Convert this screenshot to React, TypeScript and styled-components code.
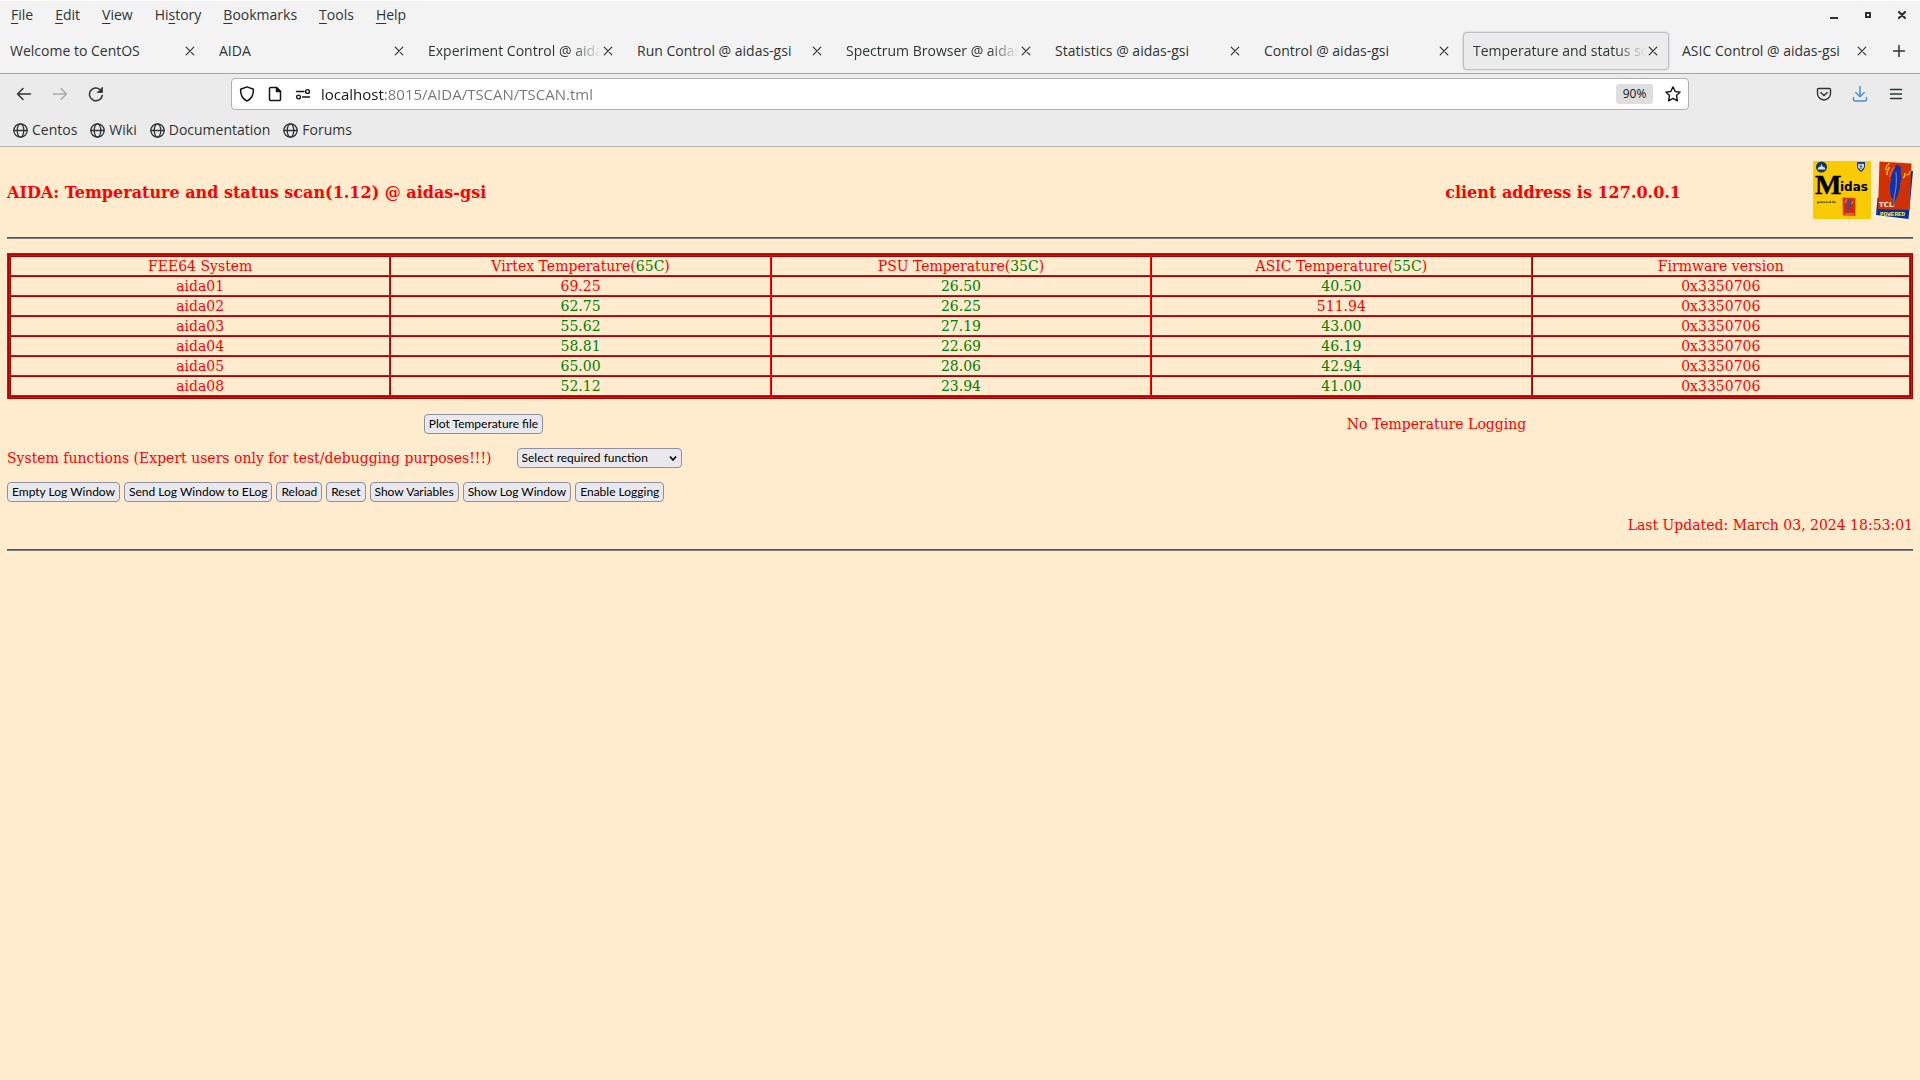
import React from "react";
import styled, { createGlobalStyle } from "styled-components";

const UI_FONT = `"Open Sans", "Noto Sans", sans-serif`;
const PAGE_FONT = `"DejaVu Serif", serif`;
const FORM_FONT = `Lato, "Open Sans", sans-serif`;

const GlobalStyle = createGlobalStyle`
  *, *::before, *::after { box-sizing: border-box; }
  body { margin: 0; background: #ffebcd; }
  button, input, select { font: inherit; color: inherit; margin: 0; }
  svg { display: block; flex: none; }
`;

/* ---------- browser chrome ---------- */

const Chrome = styled.header`
  font: 14px/20px ${UI_FONT};
  color: #2e3436;
  background: #ebebeb;
  border-bottom: 1px solid #b4b4b4;
`;

const TitleArea = styled.div`
  background: #f3f3f3;
  border-top: 1px solid #fff;
  border-bottom: 1px solid #a6a6a6;
`;

const MenuBar = styled.div`
  display: flex;
  justify-content: space-between;
  height: 28px;
`;

const MenuList = styled.nav`
  display: flex;
  align-items: center;
`;

const PlainButton = styled.button`
  border: 0;
  padding: 0;
  background: none;
  display: flex;
  align-items: center;
  justify-content: center;
`;

const MenuItem = styled.button`
  border: 0;
  background: none;
  padding: 0 11px;
  u { text-underline-offset: 3px; text-decoration-skip-ink: none; }
`;

const WindowControls = styled.div`
  display: flex;
  align-items: center;
  padding-right: 1px;
`;

const WindowButton = styled(PlainButton)`
  width: 34px;
  height: 28px;
`;

const TabStrip = styled.div`
  display: flex;
  align-items: center;
  height: 44px;
`;

const Tab = styled.div<{ $active?: boolean }>`
  flex: 1 1 0;
  min-width: 0;
  height: 38px;
  margin-right: 3px;
  padding: 0 8px 0 9px;
  display: flex;
  align-items: center;
  border: 1px solid ${(p) => (p.$active ? "#c0bfc8" : "transparent")};
  border-radius: 4px;
  background: ${(p) => (p.$active ? "#ebebeb" : "none")};
  box-shadow: ${(p) => (p.$active ? "0 0 2px rgba(128, 128, 142, 0.5)" : "none")};
`;

const TabTitle = styled.button<{ $fade?: boolean }>`
  flex: 1;
  min-width: 0;
  border: 0;
  padding: 0;
  background: none;
  text-align: left;
  white-space: nowrap;
  overflow: hidden;
  mask-image: ${(p) =>
    p.$fade ? "linear-gradient(to left, transparent, #000 30px)" : "none"};
`;

const TabClose = styled(PlainButton)`
  width: 14px;
  height: 20px;
`;

const NewTab = styled(PlainButton)`
  width: 39px;
  height: 38px;
  padding-right: 3px;
`;

const Toolbar = styled.div`
  display: flex;
  align-items: center;
  height: 40px;
`;

const ToolbarSide = styled.div<{ $end?: boolean }>`
  flex: 0 0 231px;
  display: flex;
  justify-content: ${(p) => (p.$end ? "flex-end" : "flex-start")};
  padding: 0 6px;
`;

const ToolButton = styled(PlainButton)`
  width: 36px;
  height: 32px;
`;

const AddressBar = styled.div`
  flex: 1;
  min-width: 0;
  height: 32px;
  display: flex;
  align-items: center;
  background: #fff;
  border: 1px solid #b0b0b0;
  border-radius: 4px;
  padding: 0 1px;
  color: #15141a;
`;

const AddressButton = styled(PlainButton)`
  width: 28px;
  height: 28px;
`;

const AddressInput = styled.input`
  flex: 1;
  min-width: 0;
  border: 0;
  outline: 0;
  padding: 0 0 0 4px;
  height: 28px;
  font-size: 15px;
  background: linear-gradient(to right, #15141a 67px, #76767a 67px);
  background-clip: text;
  -webkit-text-fill-color: transparent;
`;

const ZoomLevel = styled.button`
  border: 0;
  border-radius: 3px;
  background: #dedede;
  font-size: 12px;
  line-height: 20px;
  padding: 0;
  width: 37px;
  margin-right: 6px;
`;

const BookmarkBar = styled.nav`
  display: flex;
  gap: 13px;
  height: 32px;
  padding: 0 13px;
  align-items: center;
`;

const Bookmark = styled.a`
  display: flex;
  align-items: center;
  gap: 4px;
  color: inherit;
  text-decoration: none;
`;

/* ---------- page ---------- */

const Page = styled.main`
  padding: 14px 7px;
  font: 14px/18px ${PAGE_FONT};
  color: #f00;
`;

const PageHeader = styled.div`
  display: flex;
  align-items: flex-start;
  height: 60px;
  margin-bottom: 16px;
`;

const PageTitle = styled.h1`
  flex: 1;
  margin: 22px 0 0;
  font-size: 16px;
  line-height: 20px;
`;

const ClientAddress = styled.h2`
  margin: 22px 132px 0 0;
  font-size: 16px;
  line-height: 20px;
`;

const Logos = styled.div`
  display: flex;
  gap: 5px;
`;

const Rule = styled.hr`
  margin: 0;
  border: 0;
  border-top: 1px solid #545454;
  border-bottom: 1px solid #808080;
`;

const ScanTable = styled.table`
  width: 100%;
  margin: 14px 0 15px;
  table-layout: fixed;
  border-collapse: separate;
  border-spacing: 0;
  border: 2px ridge #f00;
  text-align: center;

  th, td {
    height: 20px;
    padding: 0;
    font-weight: normal;
    border: 0 ridge #f00;
    border-width: 2px 0 0 2px;
  }
  th:last-child, td:last-child { border-right-width: 2px; }
  tbody tr:last-child td { height: 22px; border-bottom-width: 2px; }
`;

const Reading = styled.td<{ $ok: boolean }>`
  color: ${(p) => (p.$ok ? "#008000" : "#f00")};
`;

const Limit = styled.span`
  color: #008000;
`;

const LoggingRow = styled.div`
  display: grid;
  grid-template-columns: 1fr 1fr;
  justify-items: center;
  align-items: center;
  height: 20px;
  margin-bottom: 14px;
`;

const FormButton = styled.button`
  height: 20px;
  padding: 0 4px;
  border: 1px solid #8f8f9d;
  border-radius: 4px;
  background: #e9e9ed;
  color: #000;
  font: 12px/16px ${FORM_FONT};
`;

const FunctionRow = styled.div`
  display: flex;
  align-items: center;
  gap: 25px;
  height: 20px;
  margin-bottom: 14px;
`;

const SelectBox = styled.div`
  position: relative;
  svg {
    position: absolute;
    right: 4px;
    top: 7px;
    pointer-events: none;
  }
`;

const FunctionSelect = styled.select`
  appearance: none;
  display: block;
  width: 165px;
  height: 20px;
  padding: 0 16px 0 4px;
  border: 1px solid #8f8f9d;
  border-radius: 4px;
  background: #e9e9ed;
  color: #000;
  font: 12px/16px ${FORM_FONT};
`;

const ButtonRow = styled.div`
  display: flex;
  gap: 4px;
  margin-bottom: 14px;
`;

const Updated = styled.p`
  margin: 0 0 15px;
  text-align: right;
`;

/* ---------- icons ---------- */

type IconProps = { size?: number; children: React.ReactNode; width?: number; color?: string };

const Icon = ({ size = 16, width = 1.5, color = "currentColor", children }: IconProps) => (
  <svg width={size} height={size} viewBox="0 0 16 16" fill="none" stroke={color}
    strokeWidth={width} strokeLinecap="round" strokeLinejoin="round" aria-hidden="true">
    {children}
  </svg>
);

const Cross = () => (
  <Icon width={1.2}><path d="M4.2 4.2l7.6 7.6M11.8 4.2l-7.6 7.6" /></Icon>
);
const Globe = () => (
  <Icon size={15} width={1.4}>
    <circle cx="8" cy="8" r="7.1" />
    <ellipse cx="8" cy="8" rx="3.5" ry="7.1" />
    <path d="M1 8h14" />
  </Icon>
);

const MidasLogo = () => (
  <svg width="58" height="58" viewBox="0 0 58 58" role="img" aria-label="Midas">
    <rect width="58" height="58" fill="#f9cb05" />
    <circle cx="8.5" cy="6" r="5.5" fill="#12376b" />
    <path d="M4.5 8.5l1.5-3 1 1 1.5-3.5 1.5 3.5 1-1 1.5 3z" fill="#dfe8ee" />
    <path d="M44 1h8v5q-1 3-4 5q-3-2-4-5z" fill="#173a86" />
    <path d="M45.5 2.5l2 1 2-1 1.500 1v2.500l-3 3.500-3-3.500z" fill="#e6e6ee" />
    <path d="M46.5 5h3M48 5v3" stroke="#173a86" fill="none" />
    <text x="2" y="33" fontFamily="Liberation Serif, serif" fontWeight="bold" fontSize="28" stroke="#000" strokeWidth="0.4">M</text>
    <text x="27" y="30" fontFamily="DejaVu Sans, sans-serif" fontWeight="bold" fontSize="12">idas</text>
    <text x="4" y="42" fontFamily="DejaVu Serif, serif" fontWeight="bold" fontSize="3">powered by</text>
    <path d="M29.5 36.5l13 .5v18l-12.500-.5z" fill="#cf2b06" stroke="#e8a010" strokeWidth="0.6" />
    <path d="M36 38q3 1 1.500 7q-1 5-2 6q-2-4-1-8q0-4 1.500-5z" fill="#4a4a8c" />
    <path d="M32 42l2-4M38.5 43l2-3M32 53h9" stroke="#f0a070" strokeWidth="0.9" fill="none" />
  </svg>
);

const TclLogo = () => (
  <svg width="37" height="58" viewBox="0 0 37 58" role="img" aria-label="Tcl powered">
    <path d="M1.5 37L34 10l3 0-4.500 48L0 54z" fill="#0a2fa0" />
    <path d="M3.5.5L35.5 2.5 33.5 49 2 48z" fill="#cf3104" />
    <path d="M20 4q5-.5 5 5q-1 3 0 5q1 5-1 8q.5 6-1.500 9q0 4-3 8q-1 4-2 6q-1.500-3-.8-7q-3-3-2.400-8q-1-7 1-11q-.5-5 2-8z" fill="#0a34ad" />
    <path d="M18 46q-1-7 1-14q2-8 1-21" fill="none" stroke="#b9a6c4" strokeWidth="0.7" />
    <path d="M13.5 16q1-6 4.500-10" fill="none" stroke="#e8896a" strokeWidth="0.9" />
    <path d="M9.5 9q.5-4 4-7M11 14q-.5-4 2.500-8M27 17q2-1 2-5M30.5 14q3 0 3.500-4" fill="none" stroke="#f5b800" strokeWidth="1.5" />
    <text x="3" y="46" fontFamily="DejaVu Sans, sans-serif" fontWeight="bold" fontSize="7" fill="#fbe6d8">TCL</text>
    <text x="4" y="55" fontFamily="Liberation Mono, monospace" fontWeight="bold" fontSize="6" fill="#f3ee3a">POWERED</text>
  </svg>
);

/* ---------- data ---------- */

const menus: [string, string, string][] = [
  ["", "F", "ile"], ["", "E", "dit"], ["", "V", "iew"], ["Hi", "s", "tory"],
  ["", "B", "ookmarks"], ["", "T", "ools"], ["", "H", "elp"],
];

const tabs: { title: string; fade?: boolean; active?: boolean }[] = [
  { title: "Welcome to CentOS" },
  { title: "AIDA" },
  { title: "Experiment Control @ aidas-gsi", fade: true },
  { title: "Run Control @ aidas-gsi" },
  { title: "Spectrum Browser @ aidas-gsi", fade: true },
  { title: "Statistics @ aidas-gsi" },
  { title: "Control @ aidas-gsi" },
  { title: "Temperature and status scan", fade: true, active: true },
  { title: "ASIC Control @ aidas-gsi" },
];

const limits = { virtex: 65, psu: 35, asic: 55 };

const systems = [
  { name: "aida01", virtex: 69.25, psu: 26.5, asic: 40.5 },
  { name: "aida02", virtex: 62.75, psu: 26.25, asic: 511.94 },
  { name: "aida03", virtex: 55.62, psu: 27.19, asic: 43 },
  { name: "aida04", virtex: 58.81, psu: 22.69, asic: 46.19 },
  { name: "aida05", virtex: 65, psu: 28.06, asic: 42.94 },
  { name: "aida08", virtex: 52.12, psu: 23.94, asic: 41 },
];

const actions = [
  "Empty Log Window", "Send Log Window to ELog", "Reload", "Reset",
  "Show Variables", "Show Log Window", "Enable Logging",
];

const Temperature = ({ value, limit }: { value: number; limit: number }) => (
  <Reading $ok={value <= limit}>{value.toFixed(2)}</Reading>
);

export default function App() {
  return (
    <>
      <GlobalStyle />
      <Chrome>
        <TitleArea>
          <MenuBar>
            <MenuList aria-label="Menu bar">
              {menus.map(([before, key, after]) => (
                <MenuItem key={key}>{before}<u>{key}</u>{after}</MenuItem>
              ))}
            </MenuList>
            <WindowControls>
              <WindowButton aria-label="Minimise">
                <Icon><path d="M4 10h8v2H4z" fill="currentColor" stroke="none" /></Icon>
              </WindowButton>
              <WindowButton aria-label="Maximise">
                <Icon><path d="M5 5h6v6H5zM7 7v2h2V7z" fill="currentColor" fillRule="evenodd" stroke="none" /></Icon>
              </WindowButton>
              <WindowButton aria-label="Close window">
                <Icon width={2.2}><path d="M5 5l6 6M11 5l-6 6" /></Icon>
              </WindowButton>
            </WindowControls>
          </MenuBar>
          <TabStrip>
            {tabs.map((tab) => (
              <Tab key={tab.title} $active={tab.active}>
                <TabTitle $fade={tab.fade}>{tab.title}</TabTitle>
                <TabClose aria-label={`Close ${tab.title}`}><Cross /></TabClose>
              </Tab>
            ))}
            <NewTab aria-label="New tab">
              <Icon><path d="M8 2.5v11M2.5 8h11" /></Icon>
            </NewTab>
          </TabStrip>
        </TitleArea>

        <Toolbar>
          <ToolbarSide>
            <ToolButton aria-label="Back">
              <Icon><path d="M14.5 8H1.5M7 2.5L1.5 8 7 13.5" /></Icon>
            </ToolButton>
            <ToolButton aria-label="Forward" disabled>
              <Icon color="#a9abac"><path d="M1.5 8h13M9 2.5L14.5 8 9 13.5" /></Icon>
            </ToolButton>
            <ToolButton aria-label="Reload page">
              <Icon>
                <path d="M14.2 9.5A6.4 6.4 0 1 1 12 3.5" />
                <path d="M14.5 1.5v5h-5z" fill="currentColor" strokeWidth="0.8" />
              </Icon>
            </ToolButton>
          </ToolbarSide>
          <AddressBar>
            <AddressButton aria-label="Tracking protection">
              <Icon><path d="M8 .9L14.4 3.3C14.7 8.5 12.5 12.8 8 15.1 3.5 12.8 1.3 8.5 1.6 3.3z" /></Icon>
            </AddressButton>
            <AddressButton aria-label="Site information">
              <Icon>
                <path d="M3.5 1.5H9.5L13.5 5.5V13.5Q13.5 14.5 12.5 14.5H3.5Q2.5 14.5 2.5 13.5V2.5Q2.5 1.5 3.5 1.5z" />
                <path d="M9.5 1.5v4h4z" fill="currentColor" />
              </Icon>
            </AddressButton>
            <AddressButton aria-label="Permissions">
              <Icon width={1.4}>
                <path d="M1.5 5.5H9M7.5 11H14.5" />
                <circle cx="12.5" cy="5.5" r="1.9" />
                <circle cx="3.5" cy="11" r="1.9" />
              </Icon>
            </AddressButton>
            <AddressInput aria-label="Address" defaultValue="localhost:8015/AIDA/TSCAN/TSCAN.tml" />
            <ZoomLevel>90%</ZoomLevel>
            <AddressButton aria-label="Bookmark this page">
              <Icon width={1.4}>
                <path d="M8 .9l2.2 4.6 4.9.6-3.6 3.5.9 5.2L8 12.3l-4.4 2.5.9-5.2L.9 6.1l4.9-.6z" />
              </Icon>
            </AddressButton>
          </AddressBar>
          <ToolbarSide $end>
            <ToolButton aria-label="Save to Pocket">
              <Icon width={1.4}>
                <path d="M2.5 2.5h11q1 0 1 1V7.5a6.5 6.5 0 0 1-13 0V3.5q0-1 1-1z" />
                <path d="M4.8 6.6L8 9.6l3.2-3" />
              </Icon>
            </ToolButton>
            <ToolButton aria-label="Downloads">
              <Icon color="#4a90d9">
                <path d="M8 .5V10.5M3.8 6.5L8 10.7l4.2-4.2M1.5 11.5v2q0 1.5 1.5 1.5h10q1.5 0 1.5-1.5v-2" />
              </Icon>
            </ToolButton>
            <ToolButton aria-label="Open application menu">
              <Icon><path d="M2.5 3.5h11M2.5 8h11M2.5 12.5h11" /></Icon>
            </ToolButton>
          </ToolbarSide>
        </Toolbar>

        <BookmarkBar aria-label="Bookmarks">
          {["Centos", "Wiki", "Documentation", "Forums"].map((name) => (
            <Bookmark key={name} href="#"><Globe />{name}</Bookmark>
          ))}
        </BookmarkBar>
      </Chrome>

      <Page>
        <PageHeader>
          <PageTitle>AIDA: Temperature and status scan(1.12) @ aidas-gsi</PageTitle>
          <ClientAddress>client address is 127.0.0.1</ClientAddress>
          <Logos><MidasLogo /><TclLogo /></Logos>
        </PageHeader>
        <Rule />
        <ScanTable>
          <thead>
            <tr>
              <th scope="col">FEE64 System</th>
              <th scope="col">Virtex Temperature(<Limit>{limits.virtex}C</Limit>)</th>
              <th scope="col">PSU Temperature(<Limit>{limits.psu}C</Limit>)</th>
              <th scope="col">ASIC Temperature(<Limit>{limits.asic}C</Limit>)</th>
              <th scope="col">Firmware version</th>
            </tr>
          </thead>
          <tbody>
            {systems.map((s) => (
              <tr key={s.name}>
                <td>{s.name}</td>
                <Temperature value={s.virtex} limit={limits.virtex} />
                <Temperature value={s.psu} limit={limits.psu} />
                <Temperature value={s.asic} limit={limits.asic} />
                <td>0x3350706</td>
              </tr>
            ))}
          </tbody>
        </ScanTable>
        <LoggingRow>
          <FormButton>Plot Temperature file</FormButton>
          <span>No Temperature Logging</span>
        </LoggingRow>
        <FunctionRow>
          <label htmlFor="system-function">
            System functions (Expert users only for test/debugging purposes!!!)
          </label>
          <SelectBox>
            <FunctionSelect id="system-function">
              <option>Select required function</option>
            </FunctionSelect>
            <svg width="10" height="7" viewBox="0 0 10 7" fill="none" stroke="#000" strokeWidth="1.6" aria-hidden="true">
              <path d="M2 1.5l3 3.5 3-3.5" />
            </svg>
          </SelectBox>
        </FunctionRow>
        <ButtonRow>
          {actions.map((label) => <FormButton key={label}>{label}</FormButton>)}
        </ButtonRow>
        <Updated>Last Updated: March 03, 2024 18:53:01</Updated>
        <Rule />
      </Page>
    </>
  );
}
